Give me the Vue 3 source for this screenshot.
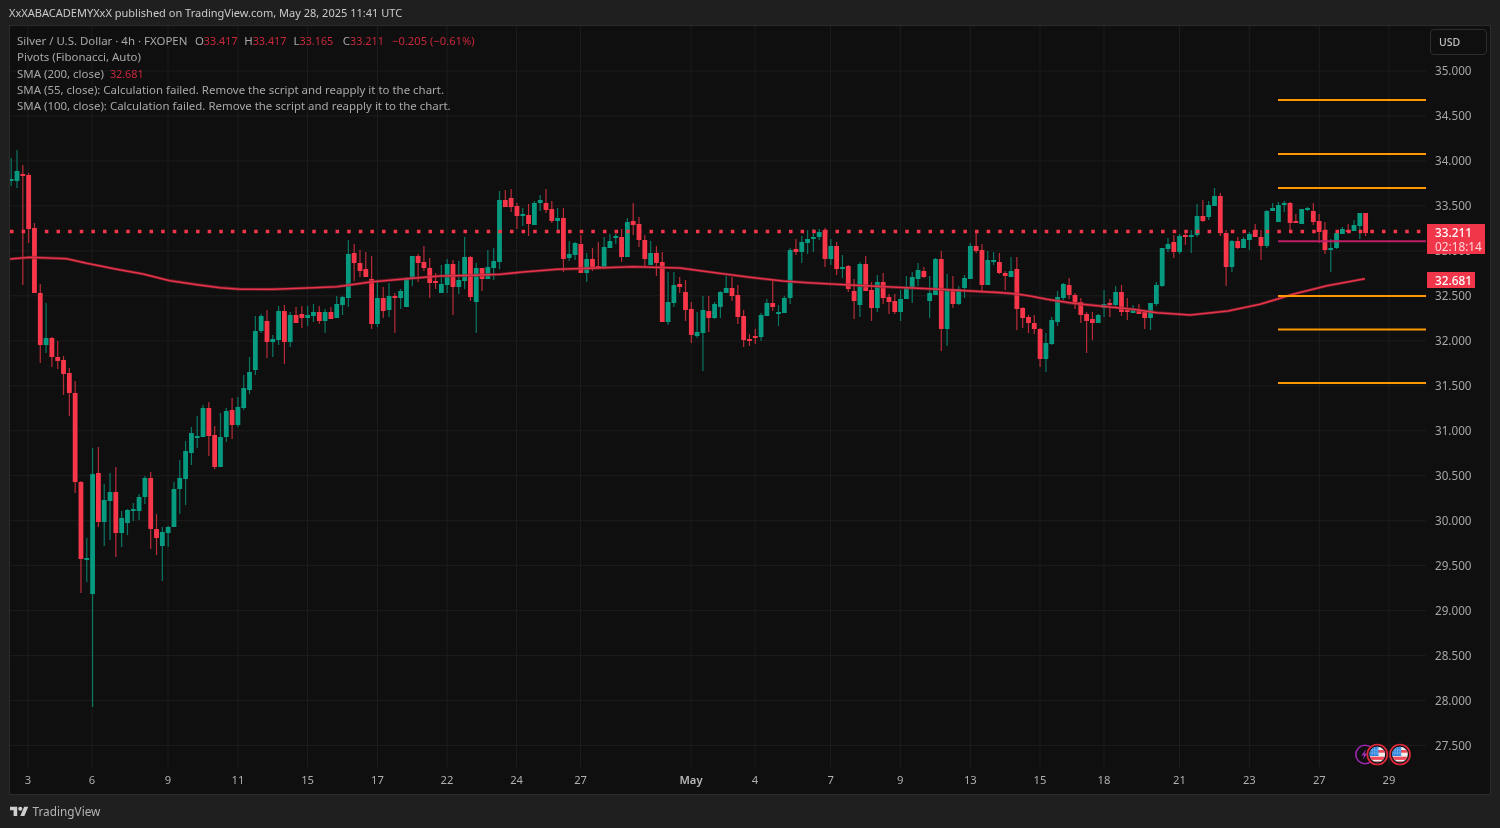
<script setup>
// [green?, bodyTop, bodyBottom, wickTop, wickBottom]
const raw = [
[1,179,181,158,186],[1,171,181,150,188],[0,174,176,165,285],[0,175,229,173,243],[0,228,293,223,293],[0,293,345,284,363],[1,338,345,303,353],[0,338,357,337,367],[0,357,361,341,369],[0,360,374,356,395],
[0,373,393,368,416],[0,393,482,381,493],[0,482,559,481,593],[1,558,560,538,582],[1,474,594,448,707],[0,473,522,447,527],[1,500,522,484,546],[1,492,501,473,540],[0,492,533,467,557],[1,518,533,511,547],
[1,510,523,509,535],[1,509,511,503,521],[1,497,511,494,520],[1,478,497,476,504],[0,478,529,472,549],[0,529,538,514,555],[1,532,546,527,581],[1,527,533,526,547],[1,489,527,482,527],[1,478,489,460,514],
[1,451,479,441,505],[1,433,453,427,465],[1,436,438,416,448],[1,408,437,405,437],[0,408,436,402,456],[0,435,467,426,469],[1,437,467,413,467],[1,411,437,408,442],[0,410,425,398,439],[1,407,425,397,427],
[1,388,408,375,410],[1,372,390,357,394],[1,331,370,316,375],[1,316,331,314,333],[0,321,342,310,358],[1,339,342,335,357],[1,311,340,306,345],[0,311,342,305,364],[1,315,342,312,347],[0,315,323,307,323],
[0,314,318,306,328],[1,315,318,306,326],[1,312,316,304,322],[0,312,321,306,324],[1,312,321,309,333],[0,312,319,307,319],[1,304,318,296,318],[1,297,305,296,315],[1,254,298,240,307],[0,253,263,244,281],
[0,263,271,250,277],[0,269,277,252,277],[0,279,324,256,329],[1,298,324,280,327],[0,298,311,287,318],[1,296,310,283,317],[0,296,298,293,333],[1,291,298,289,309],[1,279,307,277,307],[1,256,279,256,286],
[0,256,263,254,282],[0,262,268,246,271],[0,268,283,258,298],[0,281,283,273,289],[1,284,293,265,293],[1,264,285,259,293],[0,264,287,260,315],[1,280,287,261,294],[1,257,281,237,289],[0,257,297,256,301],
[1,268,302,263,333],[0,268,279,268,291],[1,267,279,250,279],[1,261,268,248,280],[1,200,262,191,269],[0,200,207,190,207],[0,198,207,189,212],[0,206,216,203,229],[1,214,216,208,226],[0,215,224,204,236],
[1,203,225,201,225],[1,200,203,195,211],[0,203,210,189,213],[0,209,221,201,223],[1,218,221,208,230],[0,218,259,208,272],[1,254,258,241,261],[1,243,255,242,260],[0,244,273,235,273],[1,259,273,253,282],
[0,259,269,248,271],[0,266,268,242,269],[1,247,267,237,267],[1,241,248,234,248],[1,236,238,234,244],[0,237,257,229,262],[1,222,257,218,257],[0,221,225,203,235],[0,224,240,217,247],[0,240,259,235,268],
[1,253,265,241,265],[0,253,263,246,276],[0,262,322,252,322],[1,302,322,272,325],[1,285,303,272,307],[0,284,287,277,293],[0,292,310,280,321],[0,309,335,302,343],[1,332,336,312,338],[1,310,333,296,371],
[0,311,318,296,332],[1,304,318,302,319],[1,292,307,291,318],[1,288,293,276,293],[0,288,296,277,301],[0,295,317,285,324],[0,316,340,310,347],[0,339,341,334,346],[0,336,338,329,344],[1,315,337,313,341],
[1,303,316,299,316],[0,303,307,280,311],[1,312,314,305,326],[1,298,313,296,313],[1,250,298,248,304],[0,249,252,239,255],[1,242,252,236,263],[1,239,243,230,254],[1,237,239,229,252],[1,232,237,229,240],
[0,230,259,228,267],[1,246,259,239,265],[0,246,269,242,275],[1,267,269,255,278],[0,266,289,265,292],[0,291,301,279,319],[1,264,305,262,317],[0,264,291,256,291],[0,290,308,282,321],[1,282,308,275,312],
[0,282,298,273,304],[0,297,302,294,314],[0,301,312,294,314],[1,299,312,290,321],[1,287,299,276,299],[1,277,288,272,303],[1,270,279,263,286],[0,271,277,267,278],[1,293,301,276,318],[1,259,295,258,295],
[0,259,329,251,351],[1,289,329,274,346],[0,289,304,276,308],[1,289,304,286,305],[1,278,288,275,298],[1,246,279,243,279],[0,246,251,230,253],[0,250,285,244,293],[1,260,285,251,285],[1,260,262,252,265],
[0,262,273,253,274],[0,273,276,271,290],[1,271,277,257,277],[0,269,309,257,330],[0,308,318,307,328],[0,317,323,315,333],[0,323,329,315,334],[0,329,359,328,367],[1,343,359,333,372],[1,320,344,317,345],
[1,297,322,291,326],[1,284,298,283,300],[0,285,295,278,299],[0,295,303,293,309],[0,302,315,298,323],[0,314,321,312,353],[0,319,323,312,340],[1,315,323,314,323],[1,304,308,290,317],[0,303,305,299,317],
[1,292,305,286,307],[0,292,312,285,316],[0,310,312,298,320],[1,310,313,305,313],[0,311,314,304,314],[0,312,318,311,329],[1,303,318,303,330],[1,285,304,282,306],[1,248,286,248,287],[1,244,249,238,252],
[0,242,252,235,258],[1,236,252,234,254],[0,235,237,232,245],[1,235,237,230,253],[1,216,235,204,237],[0,216,221,200,222],[1,205,217,201,220],[1,196,206,188,206],[0,196,233,193,236],[0,233,267,230,286],
[1,241,267,240,272],[0,241,248,237,249],[1,239,248,237,248],[1,234,240,232,250],[0,230,237,224,237],[0,237,246,230,260],[1,211,246,210,248],[1,208,211,203,211],[1,205,222,202,222],[1,203,205,201,212],
[0,203,223,202,230],[0,221,223,214,223],[1,209,224,209,224],[1,208,210,207,211],[0,211,222,203,225],[0,221,232,214,243],[0,230,250,222,254],[1,248,250,239,272],[1,233,248,230,249],[1,229,234,227,234],
[0,230,232,224,233],[1,225,231,220,231],[1,213,226,213,239],[0,213,233,213,236],
]
const candles = raw.map((c, i) => {
  const x = 11.2 + i * 5.813
  return { id: i, cls: c[0] ? 'up' : 'down', x, bx: x - 2.4, top: c[1], h: c[2] - c[1], hi: c[3], lo: c[4] }
})

const smaPoints = [[10,259],[30,257.3],[66.7,258.7],[86.7,263.3],[116.7,269.3],[143,274],[170,280.7],[197,284.7],[220,287.7],[240,289.2],[273,289.3],[307,288],[337,286.7],[373,281.7],[407,278.7],[440,276],[473,275.3],[500,274.3],[523,272],[557,269.3],[590,268.3],[633,266.7],[680,268],[717,273],[750,277.3],[783,281],[807,282.7],[850,285],[897,287.3],[940,289.3],[1000,292.6],[1017,294],[1030,296],[1047,299.3],[1073,303.3],[1107,306.7],[1133,309.3],[1157,312.7],[1190,315],[1228,311],[1260,304.3],[1293,294.3],[1327,285.7],[1365,278.7]]
const sma = smaPoints.map(p => p.join(',')).join(' ')

const prices = ['35.000','34.500','34.000','33.500','33.000','32.500','32.000','31.500','31.000','30.500','30.000','29.500','29.000','28.500','28.000','27.500']
  .map((t, i) => ({ t, y: 71 + i * 44.97 }))
const times = [['3',28],['6',92],['9',168],['11',238],['15',307.6],['17',377.5],['22',447],['24',516.6],['27',580.6],['May',691],['4',755],['7',830.6],['9',900.3],['13',970.3],['15',1040],['18',1104],['21',1179.5],['23',1249.3],['27',1319.3],['29',1389]]
  .map(([t, x]) => ({ t, x, strong: t === 'May' }))
const pivots = [100, 154, 188, 296, 329.5, 383]
const flags = [1377.3, 1400]
</script>

<template>
  <div class="page">
    <header class="top">XxXABACADEMYXxX published on TradingView.com, May 28, 2025 11:41 UTC</header>
    <main class="pane">
      <svg class="chart" viewBox="10 26 1480 768" xmlns="http://www.w3.org/2000/svg">
        <defs>
          <clipPath v-for="(f, i) in flags" :key="i" :id="'flag' + i">
            <circle :cx="f" cy="754.5" r="7.8" />
          </clipPath>
        </defs>
        <g class="grid">
          <line v-for="p in prices" :key="p.t" x1="10" :y1="p.y" x2="1426" :y2="p.y" />
          <line v-for="t in times" :key="t.x" :x1="t.x" y1="26" :x2="t.x" y2="767" />
        </g>
        <g v-for="c in candles" :key="c.id" :class="c.cls">
          <line class="wick" :x1="c.x" :y1="c.hi" :x2="c.x" :y2="c.lo" />
          <rect class="body" :x="c.bx" :y="c.top" width="4.8" :height="c.h" />
        </g>
        <line class="last" x1="10" y1="231.6" x2="1426" y2="231.6" />
        <polyline class="sma-halo" :points="sma" />
        <polyline class="sma" :points="sma" />
        <line v-for="y in pivots" :key="y" class="pivot" x1="1278" :y1="y" x2="1426" :y2="y" />
        <line class="pivot-mid" x1="1278" y1="241.3" x2="1426" y2="241.3" />

        <text v-for="p in prices" :key="p.t" class="price" x="1435" :y="p.y + 4.2">{{ p.t }}</text>
        <text v-for="t in times" :key="t.x" class="time" :class="{ strong: t.strong }" :x="t.x" y="784">{{ t.t }}</text>

        <circle class="bolt-ring" cx="1365" cy="754.5" r="9.2" />
        <path class="bolt" d="M1366 749l-4.6 6.6h2.8l-1.4 4.2 4.6-6.4h-2.8z" />
        <g v-for="(f, i) in flags" :key="f">
          <circle class="flag-ring" :cx="f" cy="754.5" r="10" />
          <g :clip-path="`url(#flag${i})`">
            <rect class="fl-white" :x="f - 8" y="746" width="16" height="17" />
            <rect class="fl-red" :x="f - 8" y="750" width="16" height="2.7" />
            <rect class="fl-red" :x="f - 8" y="756.7" width="16" height="3.2" />
            <rect class="fl-blue" :x="f - 8" y="746" width="9.2" height="10" />
            <path class="fl-stars" :d="`M${f - 5} 747v8M${f - 2.5} 747v8M${f} 747v8M${f - 7} 750h8M${f - 7} 753h8`" />
            <rect class="fl-dark" :x="f - 8" y="761.4" width="16" height="2" />
          </g>
        </g>
      </svg>

      <section class="legend">
        <div class="row">
          <span class="name">Silver / U.S. Dollar · 4h · FXOPEN</span>
          <span class="ohlc">O<b>33.417</b></span>
          <span class="ohlc">H<b>33.417</b></span>
          <span class="ohlc">L<b>33.165</b></span>
          <span class="ohlc">C<b>33.211</b></span>
          <b class="chg">−0.205 (−0.61%)</b>
        </div>
        <div class="row">Pivots (Fibonacci, Auto)</div>
        <div class="row">SMA (200, close)<b class="val">32.681</b></div>
        <div class="row">SMA (55, close): Calculation failed. Remove the script and reapply it to the chart.</div>
        <div class="row">SMA (100, close): Calculation failed. Remove the script and reapply it to the chart.</div>
      </section>

      <div class="usd">USD</div>
      <div class="tag tag-last"><span>33.211</span><span class="count">02:18:14</span></div>
      <div class="tag tag-sma">32.681</div>
    </main>
    <footer class="bottom">
      <svg class="tv" viewBox="0 4 36 18" xmlns="http://www.w3.org/2000/svg">
        <path d="M14 22H7V11H0V4h14v18zM28 22h-8l7.5-18h8L28 22z" />
        <circle cx="20" cy="8" r="4" />
      </svg>
      <span>TradingView</span>
    </footer>
  </div>
</template>

<style>
html, body { margin: 0; background: #1f1f1f; }
</style>

<style scoped>
.page {
  width: 1500px;
  height: 828px;
  display: flex;
  flex-direction: column;
  background: #1f1f1f;
  font-family: "Noto Sans", "Liberation Sans", sans-serif;
  overflow: hidden;
  filter: blur(0.3px);
}
.top {
  height: 26px;
  flex: none;
  padding: 0 9px 1px;
  display: flex;
  align-items: center;
  font-size: 11.03px;
  color: #cacaca;
  box-sizing: border-box;
}
.pane {
  position: relative;
  flex: none;
  height: 768px;
  margin: 0 10px;
  background: #0f0f0f;
  box-shadow: 0 0 0 1px #2b2b2b;
}
.chart { display: block; width: 100%; height: 100%; }
.grid line { stroke: #1d1d1d; stroke-width: 1; }
.wick { stroke-width: 1.2; stroke-opacity: 0.75; }
.up .wick { stroke: #089981; }
.down .wick { stroke: #f23645; }
.up .body { fill: #069a80; }
.down .body { fill: #f7364a; }
.last { stroke: #f7364a; stroke-width: 3.5; stroke-dasharray: 3.5 8.127; }
.sma-halo { fill: none; stroke: #8a2030; stroke-width: 3.2; stroke-opacity: 0.65; stroke-linejoin: round; }
.sma { fill: none; stroke: #e6344a; stroke-width: 1.6; stroke-linejoin: round; }
.pivot { stroke: #ff9800; stroke-width: 1.8; }
.pivot-mid { stroke: #bd1f66; stroke-width: 2; }
.price { font-size: 11.7px; fill: #a6a6a6; }
.time { font-size: 11.2px; fill: #b0b0b0; text-anchor: middle; }
.time.strong { font-weight: 600; fill: #b8b8b8; }
.bolt-ring { fill: #0f0f0f; stroke: #9c27b0; stroke-width: 1.6; }
.bolt { fill: #a02cb8; }
.flag-ring { fill: #14141a; stroke: #e0283c; stroke-width: 1.7; }
.fl-white { fill: #eeeeee; }
.fl-red { fill: #ef4a5a; }
.fl-dark { fill: #b03a44; }
.fl-blue { fill: #2f86dc; }
.fl-stars { stroke: #8fc0ee; stroke-width: 0.5; fill: none; }
.legend {
  position: absolute;
  left: 7px;
  top: 7px;
  font-size: 11.46px;
  line-height: 16.3px;
  color: #a8a8a8;
  white-space: nowrap;
}
.row { display: flex; }
.legend b { font-weight: 400; color: #c8283c; }
.ohlc { width: 49.3px; }
.ohlc b { font-size: 10.8px; }
.name { margin-right: 7.5px; }
.chg { font-size: 11.2px; margin-left: 0; }
.val { margin-left: 6px; font-size: 10.8px; }
.usd {
  position: absolute;
  left: 1420px;
  top: 3px;
  width: 57px;
  height: 26px;
  box-sizing: border-box;
  border: 1px solid #2e2e2e;
  border-radius: 4px;
  padding-left: 8px;
  display: flex;
  align-items: center;
  font-size: 10.5px;
  font-weight: 500;
  color: #c0c0c0;
}
.tag {
  position: absolute;
  left: 1417px;
  box-sizing: border-box;
  padding-left: 8px;
  background: #f23649;
  color: #fff;
  font-size: 11.8px;
  font-weight: 500;
}
.tag-last {
  top: 198px;
  width: 58px;
  height: 30px;
  display: flex;
  flex-direction: column;
  justify-content: center;
  line-height: 14px;
}
.count { color: #ffd3d8; font-weight: 400; }
.tag-sma {
  top: 246px;
  width: 48px;
  height: 16px;
  line-height: 16px;
}
.bottom {
  flex: none;
  height: 34px;
  display: flex;
  align-items: center;
  gap: 4px;
  padding-left: 10px;
  font-size: 11.8px;
  color: #b4b4b4;
}
.tv { width: 18.5px; height: 10.5px; fill: #cfcfcf; }
</style>
